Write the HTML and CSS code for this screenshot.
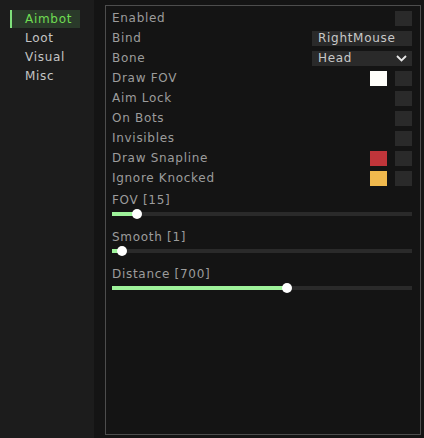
FILE: index.html
```html
<!DOCTYPE html>
<html>
<head>
<meta charset="utf-8">
<link rel="stylesheet" href="styles.css">
</head>
<body>
<div class="app">
  <nav class="sidebar">
    <div class="tab active">Aimbot</div>
    <div class="tab">Loot</div>
    <div class="tab">Visual</div>
    <div class="tab">Misc</div>
  </nav>
  <main class="panel">
    <div class="row"><span class="label">Enabled</span><span class="check"></span></div>
    <div class="row"><span class="label">Bind</span><span class="field">RightMouse</span></div>
    <div class="row"><span class="label">Bone</span><span class="field select">Head<svg class="chev" width="11" height="7" viewBox="0 0 11 7"><path d="M1 1 L5.5 5.5 L10 1" fill="none" stroke="#e8e8e8" stroke-width="1.8"/></svg></span></div>
    <div class="row"><span class="label">Draw FOV</span><span class="swatch white"></span><span class="check"></span></div>
    <div class="row"><span class="label">Aim Lock</span><span class="check"></span></div>
    <div class="row"><span class="label">On Bots</span><span class="check"></span></div>
    <div class="row"><span class="label">Invisibles</span><span class="check"></span></div>
    <div class="row"><span class="label">Draw Snapline</span><span class="swatch red"></span><span class="check"></span></div>
    <div class="row"><span class="label">Ignore Knocked</span><span class="swatch yellow"></span><span class="check"></span></div>

    <div class="slider first">
      <div class="slabel">FOV [15]</div>
      <div class="track"><div class="fill" style="width:8.3%"><span class="knob"></span></div></div>
    </div>
    <div class="slider">
      <div class="slabel">Smooth [1]</div>
      <div class="track"><div class="fill" style="width:3.3%"><span class="knob"></span></div></div>
    </div>
    <div class="slider">
      <div class="slabel">Distance [700]</div>
      <div class="track"><div class="fill" style="width:58.3%"><span class="knob"></span></div></div>
    </div>
  </main>
</div>
</body>
</html>
```
FILE: styles.css
```css
html, body {
  margin: 0;
  padding: 0;
  background: #141414;
  width: 424px;
  height: 438px;
  overflow: hidden;
}
body {
  font-family: "DejaVu Sans", sans-serif;
  font-size: 12px;
  letter-spacing: 0.7px;
}
.app {
  display: flex;
  height: 438px;
}
.sidebar {
  width: 94px;
  flex: none;
  background: #1c1c1c;
  padding-top: 10px;
  box-sizing: border-box;
  display: flex;
  flex-direction: column;
  gap: 1px;
}
.tab {
  margin-left: 10px;
  width: 70px;
  height: 18px;
  line-height: 18px;
  padding-left: 15px;
  box-sizing: border-box;
  color: #c4c4c4;
}
.tab.active {
  background: #2a3a2a;
  color: #6fdc52;
  border-left: 2px solid #7ee07a;
  padding-left: 13px;
}
.panel {
  margin: 5px 0 0 11px;
  width: 316px;
  height: 430px;
  box-sizing: border-box;
  border: 1px solid #4d4d4d;
  padding: 2px 8px 0 6px;
}
.row {
  display: flex;
  align-items: center;
  height: 20px;
}
.label {
  flex: 1;
  color: #9c9c9c;
}
.check {
  width: 17px;
  height: 15px;
  background: #2a2a2a;
}
.swatch {
  width: 17px;
  height: 15px;
  margin-right: 8px;
}
.white { background: #fffefa; }
.red { background: #c0353a; }
.yellow { background: #f0b94d; }
.field {
  width: 100px;
  height: 15px;
  line-height: 15px;
  background: #2a2a2a;
  color: #c8c8c8;
  padding-left: 6px;
  box-sizing: border-box;
  display: flex;
  align-items: center;
  justify-content: space-between;
}
.chev {
  margin-right: 5px;
}
.slider {
  padding-bottom: 9px;
}
.slider.first {
  padding-top: 4px;
}
.slabel {
  height: 16px;
  line-height: 16px;
  color: #9c9c9c;
}
.track {
  height: 4px;
  margin: 4px 0;
  background: #2a2a2a;
}
.fill {
  position: relative;
  height: 4px;
  background: #9ef29a;
}
.knob {
  position: absolute;
  right: -5px;
  top: -3px;
  width: 10px;
  height: 10px;
  border-radius: 50%;
  background: #ffffff;
}
```
